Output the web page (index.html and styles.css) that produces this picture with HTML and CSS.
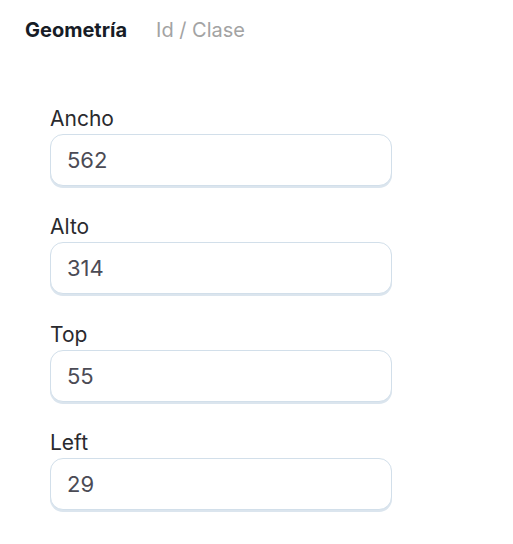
FILE: index.html
```html
<!DOCTYPE html>
<html lang="es">
<head>
<meta charset="utf-8">
<title>Geometría</title>
<link rel="stylesheet" href="styles.css">
</head>
<body>
<div class="panel">
  <nav class="tabs">
    <span class="tab active">Geometría</span>
    <span class="tab">Id / Clase</span>
  </nav>
  <form class="fields">
    <label class="field">
      <span class="label">Ancho</span>
      <input class="input" type="text" value="562">
    </label>
    <label class="field">
      <span class="label">Alto</span>
      <input class="input" type="text" value="314">
    </label>
    <label class="field">
      <span class="label">Top</span>
      <input class="input" type="text" value="55">
    </label>
    <label class="field">
      <span class="label">Left</span>
      <input class="input" type="text" value="29">
    </label>
  </form>
</div>
</body>
</html>
```
FILE: styles.css
```css
* { box-sizing: border-box; }
html, body { margin: 0; padding: 0; background: #ffffff; }
body {
  font-family: Inter, "Liberation Sans", sans-serif;
  width: 513px;
  height: 544px;
  overflow: hidden;
}
.panel {
  padding: 18px 0 0 25px;
}
.tabs {
  display: flex;
  gap: 29px;
  font-size: 20px;
  line-height: 24px;
}
.tab {
  color: #a3a3a3;
  font-weight: 400;
}
.tab.active {
  color: #171c26;
  font-weight: 700;
}
.fields {
  display: flex;
  flex-direction: column;
  gap: 28px;
  margin: 64px 0 0 25px;
  width: 342px;
}
.field {
  display: flex;
  flex-direction: column;
  gap: 3px;
}
.label {
  padding-top: 1px;
  font-size: 21px;
  line-height: 24px;
  color: #2a2a2e;
}
.input {
  height: 52px;
  width: 100%;
  border: 1px solid #d2dfea;
  border-radius: 13px;
  box-shadow: 0 2px 0 #dbe5ee;
  padding: 0 16px;
  font-family: Inter, "Liberation Sans", sans-serif;
  font-size: 22px;
  line-height: 24px;
  color: #4b4b55;
  background: #ffffff;
  outline: none;
}
```
